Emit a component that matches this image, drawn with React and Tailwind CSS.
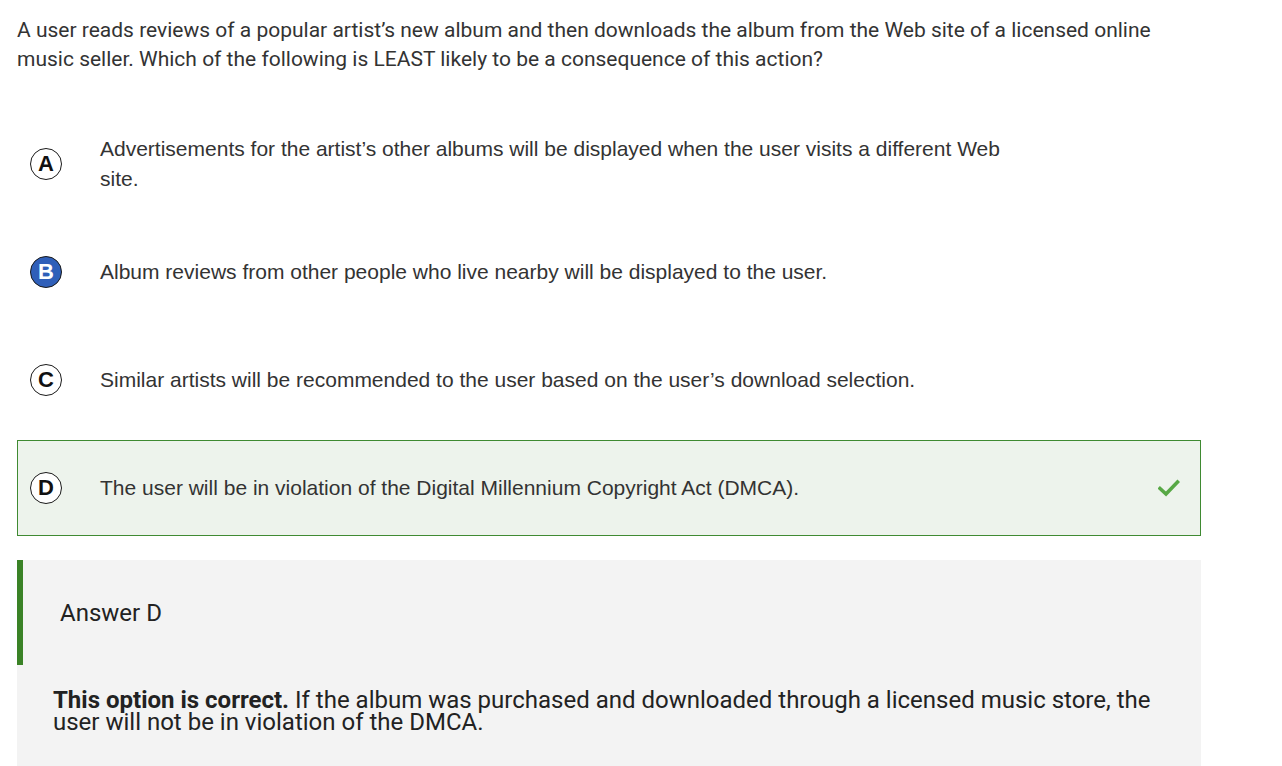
import React from "react";

const options = [
  { letter: "A", text: "Advertisements for the artist\u2019s other albums will be displayed when the user visits a different Web site." },
  { letter: "B", text: "Album reviews from other people who live nearby will be displayed to the user.", selected: true },
  { letter: "C", text: "Similar artists will be recommended to the user based on the user\u2019s download selection." },
  { letter: "D", text: "The user will be in violation of the Digital Millennium Copyright Act (DMCA).", correct: true },
];

function Badge({ letter, selected }) {
  return (
    <div
      className={
        "flex h-[32px] w-[32px] shrink-0 items-center justify-center rounded-full border border-[#1a1a1a] text-[22px] font-bold leading-none " +
        (selected ? "bg-[#2f5fb9] text-white" : "bg-white text-[#111]")
      }
      style={{ fontFamily: '"Liberation Sans", Arial, sans-serif' }}
    >
      {letter}
    </div>
  );
}

export default function App() {
  return (
    <div className="min-h-[766px] bg-white">
      <div className="ml-[17px] w-[1184px] pt-[16px]">
        <p
          className="text-[21px] leading-[29px] text-[#333333]"
          style={{ fontFamily: 'Roboto, "Liberation Sans", sans-serif' }}
        >
          A user reads reviews of a popular artist’s new album and then downloads the album from the Web site of a licensed online music seller. Which of the following is LEAST likely to be a consequence of this action?
        </p>

        <div className="mt-[42px] flex flex-col gap-[12px]">
          {options.map((o) => (
            <div
              key={o.letter}
              className={
                "flex h-[96px] items-center border pl-[12px] pr-[20px] " +
                (o.correct ? "border-[#3f8a32] bg-[#edf3ec]" : "border-transparent")
              }
            >
              <Badge letter={o.letter} selected={o.selected} />
              <div
                className="ml-[38px] max-w-[920px] text-[21px] leading-[30px] text-[#333333]"
                style={{ fontFamily: '"Liberation Sans", Arial, sans-serif' }}
              >
                {o.text}
              </div>
              {o.correct && (
                <svg className="ml-auto" width="22" height="18" viewBox="0 0 22 18">
                  <path d="M2 9.5 L8 15 L19.5 3" fill="none" stroke="#57a845" strokeWidth="3.6" strokeLinecap="square" />
                </svg>
              )}
            </div>
          ))}
        </div>

        <div
          className="mt-[24px] bg-[#f3f3f3] pb-[40px]"
          style={{ fontFamily: 'Roboto, "Liberation Sans", sans-serif' }}
        >
          <div className="flex h-[105px] items-center border-l-[6px] border-[#3a8226] pl-[37px] text-[24px] text-[#222222]">
            Answer D
          </div>
          <p className="pl-[36px] pr-[40px] pt-[24px] text-[24px] leading-[22px] text-[#222222]">
            <span className="font-bold">This option is correct.</span> If the album was purchased and downloaded through a licensed music store, the user will not be in violation of the DMCA.
          </p>
        </div>
      </div>
    </div>
  );
}
